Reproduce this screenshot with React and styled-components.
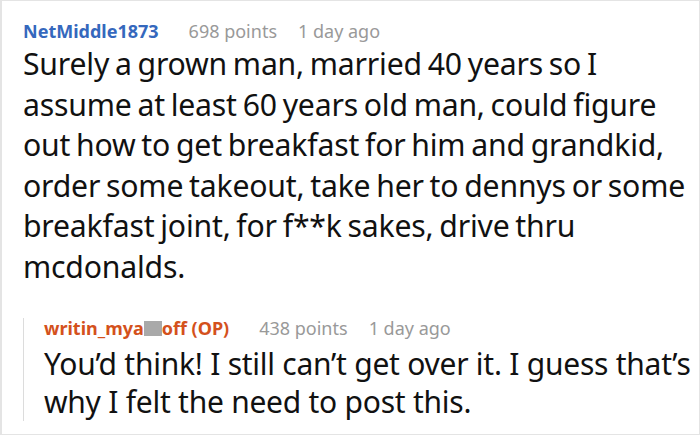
import React from 'react'
import styled, { createGlobalStyle } from 'styled-components'

const GlobalStyle = createGlobalStyle`
  html, body {
    margin: 0;
    padding: 0;
    background: #fff;
  }
  body {
    font-family: "Noto Sans", "Open Sans", sans-serif;
  }
`

const Card = styled.div`
  box-sizing: border-box;
  width: 700px;
  height: 435px;
  border: 1px solid #e4e4e4;
  border-left-width: 2px;
  padding: 18px 0 0 21px;
  background: #fff;
  overflow: hidden;
`

const Meta = styled.div`
  display: flex;
  align-items: baseline;
  font-size: 18px;
  line-height: ${props => props.tight ? '20px' : '24px'};
`

const Author = styled.span`
  font-weight: 700;
  margin-right: 30px;
  color: ${props => props.op ? '#d4511c' : '#3568bd'};
`

const Muted = styled.span`
  color: #999;
  margin-right: 21px;
`

const Redacted = styled.span`
  display: inline-block;
  width: 18px;
  height: 15px;
  background: #a9a9a9;
  vertical-align: -1px;
`

const Body = styled.p`
  margin: 1px 0 0;
  font-size: 30.2px;
  letter-spacing: -0.2px;
  word-spacing: -1.8px;
  line-height: 40.6px;
  color: #111;
`

const Reply = styled.div`
  margin-top: 30px;
  border-left: 1px solid #dcdcdc;
  padding-left: 20px;
`

const ReplyBody = styled.p`
  margin: 7px 0 0;
  font-size: 30px;
  letter-spacing: -0.25px;
  line-height: 38px;
  color: #111;
`

const App = () => {
  return (
    <>
      <GlobalStyle />
      <Card>
        <Meta>
          <Author>NetMiddle1873</Author>
          <Muted>698 points</Muted>
          <Muted>1 day ago</Muted>
        </Meta>
        <Body>
          Surely a grown man, married 40 years so I assume at least 60 years old man, could figure out how to get breakfast for him and grandkid, order some takeout, take her to dennys or some breakfast joint, for f**k sakes, drive thru mcdonalds.
        </Body>
        <Reply>
          <Meta tight>
            <Author op>writin_mya<Redacted />off (OP)</Author>
            <Muted>438 points</Muted>
            <Muted>1 day ago</Muted>
          </Meta>
          <ReplyBody>
            You’d think! I still can’t get over it. I guess that’s why I felt the need to post this.
          </ReplyBody>
        </Reply>
      </Card>
    </>
  )
}

export default App
